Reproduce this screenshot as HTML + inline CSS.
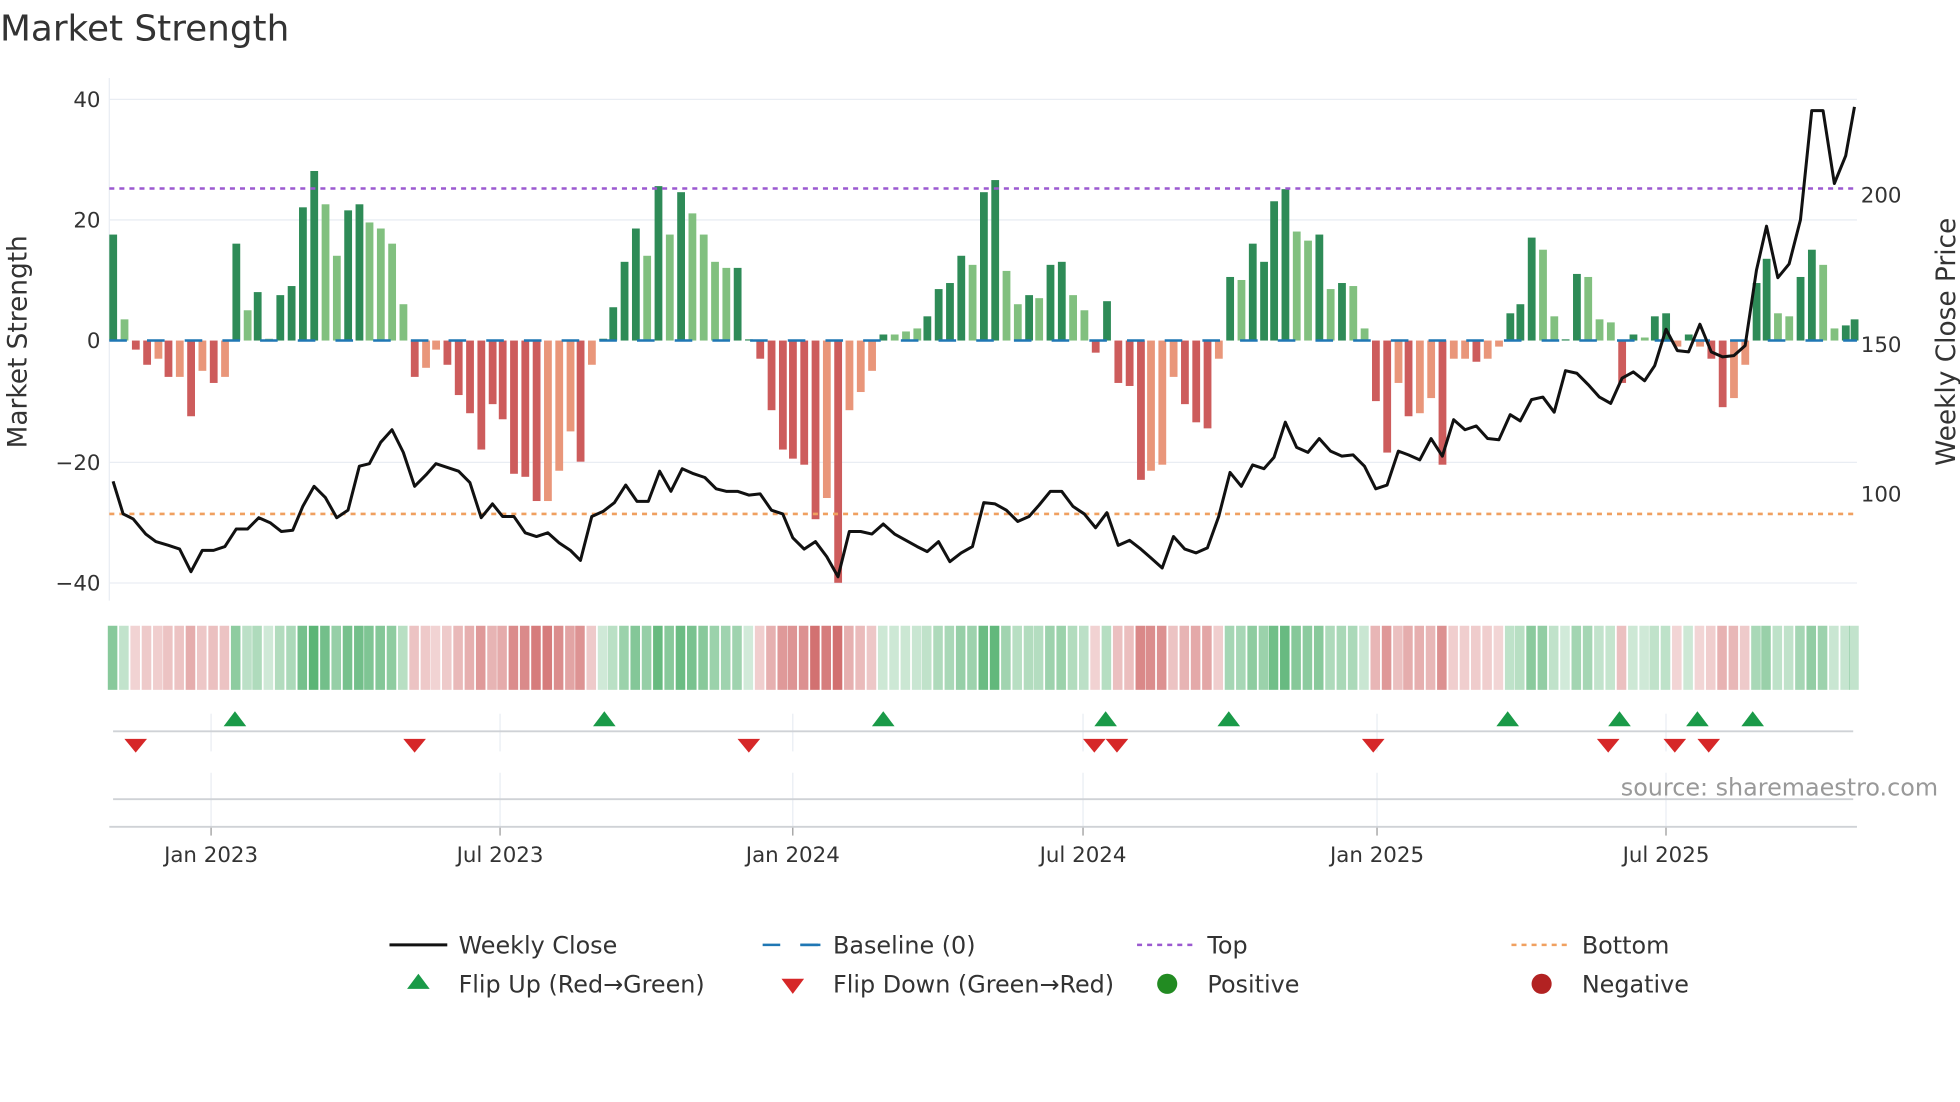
<!DOCTYPE html>
<html><head><meta charset="utf-8"><style>
html,body{margin:0;padding:0;background:#fff;}
svg{display:block;font-family:"DejaVu Sans","Liberation Sans",sans-serif;}
</style></head><body>
<svg id="s" width="1960" height="1102" viewBox="0 0 1560 877" xmlns="http://www.w3.org/2000/svg">
<rect width="1560" height="877" fill="#fff"/>
<text x="0" y="32" font-size="28.5" fill="#333">Market Strength</text>
<g stroke="#e9edf3" stroke-width="1">
<line x1="87" x2="1478" y1="79" y2="79"/><line x1="87" x2="1478" y1="175" y2="175"/>
<line x1="87" x2="1478" y1="368" y2="368"/><line x1="87" x2="1478" y1="464" y2="464"/>
<line x1="87" x2="87" y1="62" y2="478"/>
</g>
<g font-size="17" fill="#333" text-anchor="end">
<text x="80" y="85">40</text><text x="80" y="181">20</text><text x="80" y="277">0</text>
<text x="80" y="374">−20</text><text x="80" y="470">−40</text>
</g>
<g font-size="17" fill="#333">
<text x="1481" y="161">200</text><text x="1481" y="280">150</text><text x="1481" y="399">100</text>
</g>
<text transform="translate(21,272) rotate(-90)" font-size="21" fill="#333" text-anchor="middle">Market Strength</text>
<text transform="translate(1556,272) rotate(-90)" font-size="21" fill="#333" text-anchor="middle">Weekly Close Price</text>
<g id="bars"></g>
<line x1="87" x2="1478" y1="271" y2="271" stroke="#1f77b4" stroke-width="2" stroke-dasharray="14,16"/>
<line x1="87" x2="1478" y1="150" y2="150" stroke="#9b59d0" stroke-width="2" stroke-dasharray="4,4"/>
<line x1="87" x2="1478" y1="409" y2="409" stroke="#f0a060" stroke-width="2" stroke-dasharray="4,4"/>
<polyline id="price" fill="none" stroke="#111" stroke-width="2.4" stroke-linejoin="round"/>
<g id="heat"></g>
<g stroke="#e9edf3" stroke-width="1" id="vg"></g>
<line x1="90" x2="1475" y1="582" y2="582" stroke="#cfd2d6" stroke-width="1.5"/>
<line x1="90" x2="1475" y1="636" y2="636" stroke="#cfd2d6" stroke-width="1.5"/>
<line x1="87" x2="1478" y1="658" y2="658" stroke="#cfd2d6" stroke-width="1.5"/>
<g id="marks"></g>
<text x="1290" y="633" font-size="19" fill="#999">source: sharemaestro.com</text>
<g font-size="17" fill="#333" text-anchor="middle">
<text x="168" y="686">Jan 2023</text><text x="398" y="686">Jul 2023</text><text x="631" y="686">Jan 2024</text>
<text x="862" y="686">Jul 2024</text><text x="1096" y="686">Jan 2025</text><text x="1326" y="686">Jul 2025</text>
</g>
<g font-size="19" fill="#333">
<line x1="310" x2="356" y1="752" y2="752" stroke="#111" stroke-width="2.4"/>
<text x="365" y="759">Weekly Close</text>
<line x1="607" x2="653" y1="752" y2="752" stroke="#1f77b4" stroke-width="2" stroke-dasharray="14,16"/>
<line x1="637" x2="653" y1="752" y2="752" stroke="#1f77b4" stroke-width="2"/>
<text x="663" y="759">Baseline (0)</text>
<line x1="905" x2="951" y1="752" y2="752" stroke="#9b59d0" stroke-width="2" stroke-dasharray="4,4"/>
<text x="961" y="759">Top</text>
<line x1="1203" x2="1249" y1="752" y2="752" stroke="#f0a060" stroke-width="2" stroke-dasharray="4,4"/>
<text x="1259" y="759">Bottom</text>
<polygon points="324,787 342,787 333,775" fill="#1a9a48"/>
<text x="365" y="790">Flip Up (Red→Green)</text>
<polygon points="622,779 640,779 631,791" fill="#d62728"/>
<text x="663" y="790">Flip Down (Green→Red)</text>
<circle cx="929" cy="783" r="8" fill="#228b22"/>
<text x="961" y="790">Positive</text>
<circle cx="1227" cy="783" r="8" fill="#b22222"/>
<text x="1259" y="790">Negative</text>
</g>
</svg>
<script>
var NS="http://www.w3.org/2000/svg";
function el(p,t,a){var e=document.createElementNS(NS,t);for(var k in a)e.setAttribute(k,a[k]);p.appendChild(e);return e;}
var d="90:17.5g,99:3.5l,108:-1.5r,117:-4r,126:-3o,134:-6r,143:-6o,152:-12.5r,161:-5o,170:-7r,179:-6o,188:16g,197:5l,205:8g,214:0.3l,223:7.5g,232:9g,241:22g,250:28g,259:22.5l,268:14l,277:21.5g,286:22.5g,294:19.5l,303:18.5l,312:16l,321:6l,330:-6r,339:-4.5o,347:-1.5o,356:-4r,365:-9r,374:-12r,383:-18r,392:-10.5r,400:-13r,409:-22r,418:-22.5r,427:-26.5r,436:-26.5o,445:-21.5o,454:-15o,462:-20r,471:-4o,480:0.3g,488:5.5g,497:13g,506:18.5g,515:14l,524:25.5g,533:17.5l,542:24.5g,551:21l,560:17.5l,569:13l,578:12l,587:12g,596:0.2g,605:-3r,614:-11.5r,623:-18r,631:-19.5r,640:-20.5r,649:-29.5r,658:-26o,667:-40r,676:-11.5o,685:-8.5o,694:-5o,703:1g,712:1l,721:1.5l,730:2l,738:4g,747:8.5g,756:9.5g,765:14g,774:12.5l,783:24.5g,792:26.5g,801:11.5l,810:6l,819:7.5g,827:7l,836:12.5g,845:13g,854:7.5l,863:5l,872:-2r,881:6.5g,890:-7r,899:-7.5r,908:-23r,916:-21.5o,925:-20.5o,934:-6o,943:-10.5r,952:-13.5r,961:-14.5r,970:-3o,979:10.5g,988:10l,997:16g,1006:13g,1014:23g,1023:25g,1032:18l,1041:16.5l,1050:17.5g,1059:8.5l,1068:9.5g,1077:9l,1086:2l,1095:-10r,1104:-18.5r,1113:-7o,1121:-12.5r,1130:-12o,1139:-9.5o,1148:-20.5r,1157:-3o,1166:-3o,1175:-3.5r,1184:-3o,1193:-1o,1202:4.5g,1210:6g,1219:17g,1228:15l,1237:4l,1246:0.2g,1255:11g,1264:10.5l,1273:3.5l,1282:3l,1291:-7r,1300:1g,1309:0.5l,1317:4g,1326:4.5g,1335:-1o,1344:1g,1353:-1o,1362:-3r,1371:-11r,1380:-9.5o,1389:-4o,1398:9.5g,1406:13.5g,1415:4.5l,1424:4l,1433:10.5g,1442:15g,1451:12.5l,1460:2l,1469:2.5g,1476:3.5g";
var col={g:"#2e8b57",l:"#81c07f",r:"#cd5c5c",o:"#e9967a"};
var B=document.getElementById("bars"),H=document.getElementById("heat");
d.split(",").forEach(function(s){var p=s.split(":");var x=+p[0];var c=p[1].slice(-1);var v=parseFloat(p[1]);
var h=Math.abs(v)*4.82;var y=v>=0?271-h:271;
el(B,"rect",{x:x-3,y:y,width:6.2,height:Math.max(h,0.5),fill:col[c]});
var a=0.22+0.6*Math.min(Math.abs(v),30)/30;
var fc=v>=0?"rgba(46,160,80,"+a.toFixed(2)+")":"rgba(200,80,80,"+a.toFixed(2)+")";
el(H,"rect",{x:x-4.2,y:498,width:7.6,height:51,fill:fc});});
var pr="90,383 98,409 106,413 116,425 124,431 134,434 143,437 152,455 161,438 170,438 179,435 188,421 197,421 206,412 215,416 224,423 233,422 241,403 250,387 259,396 268,412 277,406 286,371 294,369 303,352 312,342 321,360 330,387 339,378 347,369 356,372 365,375 374,384 383,412 392,401 400,411 409,411 418,424 427,427 436,424 445,432 454,438 462,446 471,411 480,407 489,400 498,386 507,399 516,399 525,375 534,391 543,373 552,377 561,380 570,389 578,391 587,391 596,394 605,393 614,406 623,409 631,428 640,437 649,431 658,443 667,459 676,423 685,423 694,425 703,417 712,425 721,430 730,435 738,439 747,431 756,447 765,440 774,435 783,400 792,401 801,406 810,415 819,411 827,402 836,391 845,391 854,403 863,409 872,420 881,408 890,434 899,430 908,437 916,444 925,452 934,427 943,437 952,440 961,436 970,411 979,376 988,387 997,370 1006,373 1014,364 1023,336 1032,356 1041,360 1050,349 1059,359 1068,363 1077,362 1086,371 1095,389 1104,386 1113,359 1121,362 1130,366 1139,349 1148,363 1157,334 1166,342 1175,339 1184,349 1193,350 1202,330 1210,335 1219,318 1228,316 1237,328 1246,295 1255,297 1264,306 1273,316 1282,321 1291,301 1300,296 1309,303 1317,291 1326,262 1335,279 1344,280 1353,258 1362,280 1371,284 1380,283 1389,275 1398,215 1406,180 1415,221 1424,210 1433,175 1442,88 1451,88 1460,146 1469,124 1476,85";
document.getElementById("price").setAttribute("points",pr);
var VG=document.getElementById("vg");
[168,398,631,862,1096,1326].forEach(function(x){el(VG,"line",{x1:x,x2:x,y1:568,y2:598});el(VG,"line",{x1:x,x2:x,y1:615,y2:658});
el(VG,"line",{x1:x,x2:x,y1:658,y2:665,stroke:"#999"});});
var M=document.getElementById("marks");
[187,481,703,880,978,1200,1289,1351,1395].forEach(function(x){el(M,"polygon",{points:(x-9)+",578 "+(x+9)+",578 "+x+",566",fill:"#1a9a48"});});
[108,330,596,871,889,1093,1280,1333,1360].forEach(function(x){el(M,"polygon",{points:(x-9)+",588 "+(x+9)+",588 "+x+",599",fill:"#d62728"});});
</script>
</body></html>
